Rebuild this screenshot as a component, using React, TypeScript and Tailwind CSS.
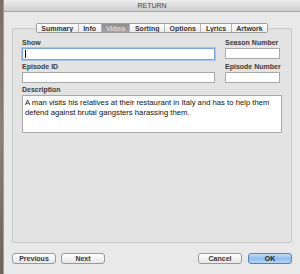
export default function App() {
  const tabs = ["Summary", "Info", "Video", "Sorting", "Options", "Lyrics", "Artwork"];
  const label = "text-[7px] font-bold text-[#3a3a3a] leading-none whitespace-nowrap";
  const field = "h-[11px] border border-[#a9a9a9] bg-white";
  const btn =
    "h-[11px] rounded-[3px] border border-[#9a9a9a] bg-gradient-to-b from-white to-[#e6e6e6] text-[7px] font-bold leading-none text-[#333] flex items-center justify-center";

  return (
    <div className="flex h-[274px] w-[300px] overflow-hidden font-['Liberation_Sans',sans-serif]">
      <div className="w-[3px] bg-gradient-to-b from-[#7a6f66] via-[#8a8278] to-[#6c645c]" />
      <div className="flex flex-1 flex-col border-l border-[#9a9a9a] bg-[#e9e9e9]">
        <div className="flex h-[12px] items-center justify-center border-b border-[#a8a8a8] bg-gradient-to-b from-[#ececec] to-[#cfcfcf] text-[7px] leading-none text-[#444]">
          RETURN
        </div>

        <div className="mx-[8px] mt-[16px] flex h-[215px] flex-col rounded-[2px] border border-[#c9c9c9] bg-[#e3e3e3]">
          <div className="-mt-[6px] flex justify-center">
            <div className="flex h-[10px] overflow-hidden rounded-[2px] border border-[#9d9d9d] bg-white">
              {tabs.map((t, i) => (
                <div
                  key={t}
                  className={
                    "flex items-center px-[4.5px] text-[7px] font-bold leading-none " +
                    (i > 0 ? "border-l border-[#b4b4b4] " : "") +
                    (t === "Video"
                      ? "bg-gradient-to-b from-[#8f8f8f] to-[#a5a5a5] text-[#d8d8d8]"
                      : "bg-gradient-to-b from-white to-[#ececec] text-[#333]")
                  }
                >
                  {t}
                </div>
              ))}
            </div>
          </div>

          <div className="mt-[6px] flex gap-[10px] px-[9px]">
            <div className="flex w-[193px] flex-col gap-[2px]">
              <span className={label}>Show</span>
              <div className="h-[12px] border border-[#7aa3d6] bg-white shadow-[0_0_0_1px_#a9c6ea] flex items-center pl-[2px]">
                <div className="h-[8px] w-px bg-black" />
              </div>
            </div>
            <div className="flex w-[55px] flex-col gap-[2px]">
              <span className={label}>Season Number</span>
              <div className={field} />
            </div>
          </div>

          <div className="mt-[3px] flex gap-[10px] px-[9px]">
            <div className="flex w-[193px] flex-col gap-[2px]">
              <span className={label}>Episode ID</span>
              <div className={field} />
            </div>
            <div className="flex w-[55px] flex-col gap-[2px]">
              <span className={label}>Episode Number</span>
              <div className={field} />
            </div>
          </div>

          <div className="mt-[3px] flex flex-col gap-[2px] px-[9px]">
            <span className={label}>Description</span>
            <div className="h-[38px] border border-[#a9a9a9] bg-white px-[2px] pt-[2px] text-[7.7px] leading-[10px] text-[#111]">
              A man visits his relatives at their restaurant in Italy and has to help them defend against brutal gangsters harassing them.
            </div>
          </div>
        </div>

        <div className="mt-[10px] flex px-[8px]">
          <div className={btn + " w-[44px]"}>Previous</div>
          <div className={btn + " ml-[5px] w-[44px]"}>Next</div>
          <div className={btn + " ml-auto w-[44px]"}>Cancel</div>
          <div className="ml-[6px] flex h-[11px] w-[44px] items-center justify-center rounded-[3px] border border-[#5a7fb3] bg-gradient-to-b from-[#c8def8] via-[#8fbbee] to-[#b6d6f8] text-[7px] font-bold leading-none text-[#222]">
            OK
          </div>
        </div>
      </div>
    </div>
  );
}
